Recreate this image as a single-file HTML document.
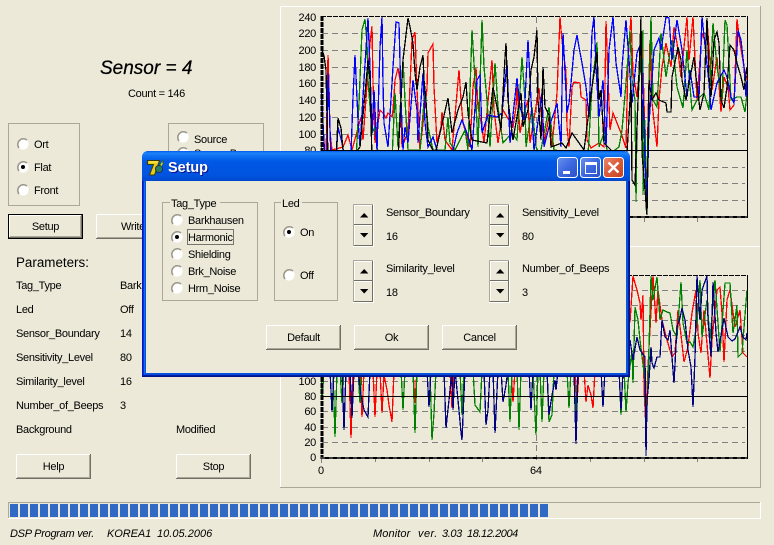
<!DOCTYPE html>
<html><head><meta charset="utf-8"><title>Setup</title>
<style>
html,body{margin:0;padding:0;background:#ECE9D8;width:774px;height:545px;overflow:hidden}
svg{position:absolute;left:0;top:0;display:block}
text{font-family:"Liberation Sans",sans-serif;font-size:11px;letter-spacing:-.3px;fill:#000}
.c{text-anchor:middle}
.r{text-anchor:end}
.k{shape-rendering:crispEdges}
.g{stroke:#808080;stroke-width:1;stroke-dasharray:6 4;fill:none;shape-rendering:crispEdges}
.l{fill:none;stroke-width:1.3;stroke-linejoin:miter;shape-rendering:crispEdges}
.i{font-style:italic}
</style></head><body>
<svg width="774" height="545" viewBox="0 0 774 545" xmlns="http://www.w3.org/2000/svg">
<defs>
<g id="btn" class="k"><rect width="75" height="25" fill="#ECE9D8"/><rect width="75" height="1" fill="#fff"/><rect width="1" height="25" fill="#fff"/><rect x="73" y="1" width="1" height="23" fill="#ACA899"/><rect x="1" y="23" width="73" height="1" fill="#ACA899"/><rect x="74" width="1" height="25" fill="#716F64"/><rect y="24" width="75" height="1" fill="#716F64"/></g>
<g id="rad"><circle r="5.6" fill="#fff"/><path d="M-4,4A5.7,5.7 0 0 1 4,-4" fill="none" stroke="#9A978A" stroke-width="1.5"/></g>
<g id="radc"><use href="#rad"/><circle r="2" fill="#000"/></g>
<g id="spin"><g class="k"><rect width="21" height="43" fill="#fff"/><rect width="20" height="42" fill="#ACA899"/><rect x="1" y="1" width="19" height="41" fill="#ECE9D8"/>
<rect x="1" y="1" width="18" height="1" fill="#fff"/><rect x="1" y="1" width="1" height="19" fill="#fff"/><rect x="19" y="1" width="1" height="20" fill="#716F64"/><rect x="1" y="20" width="19" height="1" fill="#716F64"/>
<rect x="1" y="21" width="18" height="1" fill="#fff"/><rect x="1" y="21" width="1" height="20" fill="#fff"/><rect x="19" y="21" width="1" height="21" fill="#716F64"/><rect x="1" y="41" width="19" height="1" fill="#716F64"/></g>
<path d="M7,13.5h8.4l-4.2,-4.5z M7,29h8.4l-4.2,4.5z" fill="#000"/></g>
<linearGradient id="tb" x1="0" y1="0" x2="0" y2="1"><stop offset="0" stop-color="#0058EE"/><stop offset=".07" stop-color="#1E84F8"/><stop offset=".16" stop-color="#0F72F2"/><stop offset=".35" stop-color="#0058E4"/><stop offset=".8" stop-color="#0054E0"/><stop offset="1" stop-color="#0048CC"/></linearGradient>
<linearGradient id="bb" x1="0" y1="0" x2="1" y2="1"><stop offset="0" stop-color="#6C93EE"/><stop offset=".5" stop-color="#3C68E0"/><stop offset="1" stop-color="#2A4FC8"/></linearGradient>
<linearGradient id="bc" x1="0" y1="0" x2="1" y2="1"><stop offset="0" stop-color="#E98A6C"/><stop offset=".5" stop-color="#DB5A38"/><stop offset="1" stop-color="#C2401E"/></linearGradient>
<pattern id="pb" x="10" y="0" width="10" height="20" patternUnits="userSpaceOnUse"><rect width="8" height="20" fill="#316AC5"/></pattern>
<clipPath id="c1"><rect x="321" y="16" width="427" height="202"/></clipPath>
<clipPath id="c2"><rect x="321" y="275" width="427" height="183"/></clipPath>
</defs>

<rect width="774" height="545" fill="#ECE9D8"/>

<!-- chart panel -->
<g class="k">
<rect x="280" y="6" width="480" height="1" fill="#fff"/>
<rect x="280" y="6" width="1" height="481" fill="#fff"/>
<rect x="760" y="6" width="1" height="482" fill="#ACA899"/>
<rect x="280" y="487" width="481" height="1" fill="#ACA899"/>
<rect x="281" y="246" width="479" height="1" fill="#fff"/>
</g>

<!-- top chart grid -->
<g class="g">
<path d="M322,33.5H745M322,50.5H745M322,67.5H745M322,83.5H745M322,100.5H745M322,117.5H745M322,134.5H745M322,167.5H745M322,183.5H745M322,200.5H745"/>
<path d="M536.5,17V217"/>
</g>
<g font-size="11">
<text class="r" x="316" y="21">240</text><text class="r" x="316" y="37">220</text><text class="r" x="316" y="54">200</text><text class="r" x="316" y="71">180</text><text class="r" x="316" y="87">160</text><text class="r" x="316" y="104">140</text><text class="r" x="316" y="121">120</text><text class="r" x="316" y="138">100</text><text class="r" x="316" y="154">80</text>
</g>

<g clip-path="url(#c1)">
<polyline class="l" stroke="#FF0000" points="321,160 326,160 328,55 329,87 330,132 332,150 343,147 348,135 352,150 361,117 363,140 370,43 372,26 373,83 375,143 380,110 383,113 386,118 388,113 392,117 393,110 395,80 398,68 400,80 402,147 408,132 412,40 415,32 417,90 420,150 427,88 428,53 433,44 434,87 437,143 441,127 442,112 445,140 452,150 459,70 461,100 463,123 470,147 473,87 476,68 478,107 482,127 484,143 492,60 494,110 498,143 503,110 513,127 516,107 517,87 520,133 523,117 528,100 530,143 539,88 541,113 544,143 549,117 552,147 557,93 560,17 561,30 563,50 566,72 567,127 569,147 572,87 574,82 580,83 581,97 586,100 587,140 591,148 599,143 604,147 606,21 608,77 610,130 613,113 617,123 621,133 626,148 628,60 631,17 633,73 637,97 642,40 644,100 645,157 647,195 648,120 650,40 652,103 657,147 659,100 662,67 666,43 671,67 674,27 677,43 681,77 687,17 689,60 693,17 697,100 702,33 706,43 707,20 712,90 717,57 721,112 724,77 728,87 730,110 734,105 737,19 740,43 744,67 747,80"/>
<polyline class="l" stroke="#008000" points="321,147 324,160 356,160 359,103 362,30 365,19 367,43 368,80 372,133 375,127 377,147 380,160 392,160 395,93 398,147 403,60 405,100 408,150 420,150 425,90 428,127 433,150 445,150 448,117 450,143 455,150 465,130 468,150 472,30 475,80 478,147 482,20 484,67 487,100 490,147 495,63 498,107 503,143 512,133 517,140 522,57 525,100 526,147 532,107 536,147 540,155 549,107 554,150 588,155 592,87 597,42 599,147 604,133 608,155 619,147 622,130 626,83 630,30 632,80 635,100 636,202 637,120 639,83 643,30 643,195 645,120 646,210 648,133 651,17 653,100 657,107 661,33 666,77 672,40 677,87 683,108 687,50 692,110 697,100 704,93 709,110 713,23 717,67 722,100 725,20 727,25 731,100 737,97 741,97 745,112 747,93"/>
<polyline class="l" stroke="#0000FF" points="321,88 323,123 325,160 327,160 328,73 329,97 331,160 336,160 338,127 342,143 345,160 351,155 353,97 355,55 358,120 360,147 364,80 368,18 370,67 372,133 374,90 377,150 380,47 382,17 383,83 384,123 388,147 393,67 396,22 399,23 401,100 403,150 405,127 408,143 413,80 417,110 418,143 423,73 425,123 428,147 433,137 437,150 452,155 457,133 462,120 467,133 472,150 477,80 480,75 482,133 488,115 497,117 502,113 507,63 510,143 517,78 520,107 524,120 528,40 529,60 531,100 534,150 542,93 544,147 549,127 556,107 557,103 561,147 563,33 565,72 567,113 569,103 571,83 574,50 577,35 579,47 582,63 586,87 589,117 592,33 594,17 596,67 599,117 603,80 606,147 609,50 613,17 616,63 621,97 622,67 626,20 629,60 632,103 637,53 641,43 644,123 645,160 647,198 648,162 649,123 654,50 659,38 661,50 666,17 669,18 672,60 677,20 682,50 687,97 690,70 694,97 699,97 702,17 709,83 711,110 717,83 724,70 727,77 731,97 734,103 738,30 741,40 744,67 746,97 747,80"/>
<polyline class="l" stroke="#000000" points="321,47 324,56 326,70 328,160 336,160 338,118 341,128 343,150 350,160 360,147 366,83 368,60 370,80 372,160 398,160 403,60 408,18 410,27 413,43 415,73 417,90 420,67 423,55 424,80 426,100 428,140 435,155 448,98 452,133 458,110 463,97 466,82 468,113 472,140 487,143 493,87 497,107 501,130 505,58 506,43 508,100 513,140 521,93 523,127 528,110 531,70 534,57 537,30 538,100 541,140 543,67 545,107 549,115 551,147 562,143 566,148 572,133 584,150 592,87 595,67 597,52 599,100 601,90 604,143 616,155 627,153 631,83 632,180 635,185 638,100 641,17 642,153 647,215 648,153 649,80 652,100 656,93 659,100 666,103 667,112 671,112 672,77 678,47 681,60 682,80 686,100 689,83 694,57 696,77 700,110 704,93 707,18 709,77 711,97 714,40 717,32 719,43 721,100 724,108 727,87 730,45 734,50 737,63 741,77 744,90 747,67"/>
</g>

<!-- top frame -->
<g class="k">
<path d="M321,150.5H748" stroke="#000" fill="none"/>
<rect x="747" y="16" width="1" height="202" fill="#000"/>
<path d="M321,16.5H747" stroke="#000" stroke-dasharray="5 1" fill="none"/>
<path d="M322,16V218" stroke="#000" stroke-width="3" stroke-dasharray="5 1" fill="none"/>
<path d="M321,217H748" stroke="#000" stroke-width="2" fill="none"/>
<path d="M321,217H747" stroke="#808080" stroke-width="1" stroke-dasharray="4 4" fill="none"/>
<path d="M644.5,218v4M697.5,218v4" stroke="#808080" fill="none"/>
</g>

<!-- bottom chart grid -->
<g class="g">
<path d="M322,290.5H745M322,305.5H745M322,320.5H745M322,335.5H745M322,351.5H745M322,366.5H745M322,381.5H745M322,411.5H745M322,427.5H745M322,442.5H745"/>
<path d="M536.5,275V460"/>
</g>
<g>
<text class="r" x="316" y="385">100</text><text class="r" x="316" y="400">80</text><text class="r" x="316" y="415">60</text><text class="r" x="316" y="431">40</text><text class="r" x="316" y="446">20</text><text class="r" x="316" y="461">0</text>
<text x="318" y="474">0</text><text x="530" y="474">64</text>
</g>

<g clip-path="url(#c2)">
<polyline class="l" stroke="#FF0000" points="349,370 351,438 353,370 360,370 362,417 364,370 373,370 375,417 377,370 380,370 382,413 384,375 387,390 389,405 392,422 394,370 413,370 415,403 417,370 450,370 452,408 454,370 511,370 513,402 515,370 575,370 577,402 579,370 584,370 586,402 588,385 591,395 593,408 595,370 630,322 633,276 637,290 640,303 641,320 643,295 644,387 646,430 647,390 649,347 653,276 656,323 658,290 662,320 667,340 672,357 675,353 678,310 681,335 684,362 688,347 692,313 696,290 698,333 701,353 704,310 710,378 712,340 717,290 720,287 722,313 724,362 727,300 730,290 735,327 740,310 743,353 747,357"/>
<polyline class="l" stroke="#008000" points="321,370 322,400 324,370 333,370 335,437 337,370 340,370 342,403 344,370 358,370 360,403 362,370 401,370 403,410 405,370 413,370 415,433 417,370 430,370 432,440 434,413 436,370 460,370 462,415 464,370 473,370 475,405 480,412 482,370 508,370 510,422 512,370 517,370 519,430 521,370 533,370 536,435 538,370 540,370 542,422 544,370 547,370 549,422 552,415 554,370 567,370 569,408 571,370 574,370 576,420 578,370 619,370 621,415 623,370 624,370 626,412 628,383 632,350 633,383 635,307 638,320 640,340 645,380 646,440 649,347 651,276 653,300 657,277 660,320 663,310 667,312 670,313 673,330 677,337 681,282 683,323 687,343 690,342 693,347 697,323 700,280 702,337 707,300 710,340 715,280 720,352 725,283 728,283 730,283 733,333 737,305 738,357 742,353 747,290"/>
<polyline class="l" stroke="#000080" points="330,370 332,412 334,370 342,370 344,430 346,370 350,370 352,418 354,370 358,370 361,395 364,410 368,417 370,370 427,370 429,407 431,370 444,370 446,428 449,400 452,370 453,410 455,370 458,400 461,432 462,440 465,370 484,370 486,425 488,410 490,370 493,370 495,433 498,370 501,370 503,402 506,385 508,370 529,370 531,410 533,370 547,370 549,415 552,395 555,380 556,390 558,370 574,370 576,444 578,370 601,370 603,407 605,370 619,370 621,410 623,370 630,340 633,360 637,337 640,350 645,357 646,456 647,400 649,380 651,347 652,363 654,368 657,357 660,357 662,320 665,337 668,340 670,330 672,357 674,383 677,327 680,318 682,308 685,320 688,350 691,367 693,407 695,357 697,276 700,320 702,290 707,276 708,320 711,357 713,282 716,333 718,352 722,330 724,318 728,337 732,341 735,339 740,327 743,337 746,340 747,333"/>
</g>

<!-- bottom frame -->
<g class="k">
<path d="M321,396.5H748" stroke="#000" fill="none"/>
<rect x="747" y="275" width="1" height="184" fill="#000"/>
<path d="M321,275.5H747" stroke="#000" stroke-dasharray="5 1" fill="none"/>
<path d="M322,275V459" stroke="#000" stroke-width="3" stroke-dasharray="5 1" fill="none"/>
<path d="M321,458H748" stroke="#000" stroke-width="2" fill="none"/>
<path d="M321,458H747" stroke="#808080" stroke-width="1" stroke-dasharray="4 4" fill="none"/>
<path d="M321.5,459v4M375.5,459v3M429.5,459v3M482.5,459v3M590.5,459v3M644.5,459v3M697.5,459v3" stroke="#808080" fill="none"/>
</g>

<!-- left side -->
<text x="100" y="74" class="i" style="font-size:19px;letter-spacing:0;stroke:#000;stroke-width:.25">Sensor = 4</text>
<text x="128" y="97">Count = 146</text>

<g class="k" fill="none">
<rect x="8.5" y="123.5" width="71" height="82" stroke="#ACA899"/>
<rect x="168.5" y="123.5" width="95" height="60" stroke="#ACA899"/>
</g>
<use href="#rad" x="23" y="144"/><use href="#radc" x="23" y="167"/><use href="#rad" x="23" y="190"/>
<text x="34" y="148">Ort</text><text x="34" y="171">Flat</text><text x="34" y="194">Front</text>
<use href="#rad" x="183" y="137"/><use href="#rad" x="183" y="153"/>
<text x="194" y="143">Source</text><text x="194" y="157">Source B</text>

<rect x="8" y="214" width="75" height="25" fill="#000" class="k"/>
<g class="k"><rect x="9" y="215" width="73" height="23" fill="#ECE9D8"/><rect x="9" y="215" width="72" height="1" fill="#fff"/><rect x="9" y="215" width="1" height="22" fill="#fff"/><rect x="81" y="215" width="1" height="23" fill="#716F64"/><rect x="9" y="237" width="73" height="1" fill="#716F64"/><rect x="80" y="216" width="1" height="21" fill="#ACA899"/><rect x="10" y="236" width="71" height="1" fill="#ACA899"/></g>
<text class="c" x="45.5" y="230">Setup</text>
<use href="#btn" x="96" y="214"/><text class="c" x="133" y="230">Write</text>

<text x="16" y="267" style="font-size:13.4px;letter-spacing:0">Parameters:</text>
<text x="16" y="289">Tag_Type</text><text x="120" y="289">Barkhausen</text>
<text x="16" y="313">Led</text><text x="120" y="313">Off</text>
<text x="16" y="337">Sensor_Boundary</text><text x="120" y="337">14</text>
<text x="16" y="361">Sensitivity_Level</text><text x="120" y="361">80</text>
<text x="16" y="385">Similarity_level</text><text x="120" y="385">16</text>
<text x="16" y="409">Number_of_Beeps</text><text x="120" y="409">3</text>
<text x="16" y="433">Background</text><text x="176" y="433">Modified</text>
<use href="#btn" x="16" y="454"/><text class="c" x="53.5" y="470">Help</text>
<use href="#btn" x="176" y="454"/><text class="c" x="213.5" y="470">Stop</text>

<!-- progress -->
<g class="k">
<rect x="8" y="502" width="752" height="1" fill="#ACA899"/><rect x="8" y="502" width="1" height="16" fill="#ACA899"/>
<rect x="760" y="502" width="1" height="17" fill="#fff"/><rect x="8" y="518" width="753" height="1" fill="#fff"/>
<rect x="10" y="504" width="538" height="13" fill="url(#pb)"/>
</g>
<g class="i" style="font-size:10.5px">
<text x="10" y="537" textLength="84" class="i">DSP Program ver.</text><text x="107" y="537" textLength="44" class="i">KOREA1</text><text x="157" y="537" textLength="55" class="i">10.05.2006</text>
<text x="373" y="537" textLength="37" class="i">Monitor</text><text x="418" y="537" textLength="19" class="i">ver.</text><text x="442" y="537" textLength="20" class="i">3.03</text><text x="467" y="537" textLength="51" class="i">18.12.2004</text>
</g>

<!-- dialog -->
<path d="M142,377V158Q142,151 149,151H623Q630,151 630,158V377Z" fill="#0A40D8"/>
<path d="M142,181V158Q142,151 149,151H623Q630,151 630,158V181Z" fill="url(#tb)"/>
<g class="k">
<rect x="142" y="181" width="1" height="196" fill="#0019B8"/><rect x="143" y="181" width="1" height="195" fill="#0831D9"/><rect x="144" y="181" width="1" height="194" fill="#166AEE"/><rect x="145" y="181" width="1" height="193" fill="#0855DD"/>
<rect x="629" y="181" width="1" height="196" fill="#00138C"/><rect x="628" y="181" width="1" height="195" fill="#001EA0"/><rect x="627" y="181" width="1" height="194" fill="#0855DD"/><rect x="626" y="181" width="1" height="193" fill="#0855DD"/>
<rect x="142" y="376" width="488" height="1" fill="#00138C"/><rect x="143" y="375" width="486" height="1" fill="#001EA0"/><rect x="144" y="374" width="484" height="1" fill="#0A4BDE"/><rect x="145" y="373" width="482" height="1" fill="#0855DD"/>
<rect x="146" y="181" width="480" height="192" fill="#ECE9D8"/>
</g>
<!-- delphi icon -->
<g transform="translate(147,159)">
<path d="M0.5,1.5H12.5L7.5,16H2.5L6.5,5.5H0.5Z" fill="#E8CE10" stroke="#3A3A08" stroke-width="1"/>
<path d="M2,3H11" stroke="#FFF27A" stroke-width="1"/>
<circle cx="12" cy="10" r="3.6" fill="#2E7A62" stroke="#16324A" stroke-width=".9"/>
<path d="M13,6L16,0.5L15.5,4L16.5,3.5L14.5,7.5Z" fill="#C8E030" stroke="#3A5000" stroke-width=".5"/>
</g>
<text x="168" y="172" style="font-size:14.4px;font-weight:bold;letter-spacing:0;fill:#0F1089" transform="translate(1,1)">Setup</text>
<text x="168" y="172" style="font-size:14.4px;font-weight:bold;letter-spacing:0;fill:#fff">Setup</text>
<!-- caption buttons -->
<rect x="557.5" y="157.5" width="20" height="20" rx="3" fill="url(#bb)" stroke="#fff"/>
<rect x="563" y="171" width="7" height="3" fill="#fff" class="k"/>
<rect x="580.5" y="157.5" width="20" height="20" rx="3" fill="url(#bb)" stroke="#fff"/>
<rect x="585.5" y="162.5" width="11" height="11" fill="none" stroke="#fff" class="k"/><rect x="585" y="162" width="12" height="3" fill="#fff" class="k"/>
<rect x="603.5" y="157.5" width="20" height="20" rx="3" fill="url(#bc)" stroke="#fff"/>
<path d="M608.5,162.5L618.5,172.5M618.5,162.5L608.5,172.5" stroke="#fff" stroke-width="2.4" fill="none"/>

<!-- group boxes -->
<g class="k" fill="none">
<rect x="162.5" y="202.5" width="95" height="98" stroke="#ACA899"/>
<rect x="274.5" y="202.5" width="63" height="98" stroke="#ACA899"/>
</g>
<rect x="170" y="200" width="50" height="6" fill="#ECE9D8" class="k"/>
<rect x="281" y="200" width="21" height="6" fill="#ECE9D8" class="k"/>
<text x="171" y="207">Tag_Type</text>
<text x="282" y="207">Led</text>
<use href="#rad" x="177" y="220"/><use href="#radc" x="177" y="237"/><use href="#rad" x="177" y="254"/><use href="#rad" x="177" y="271"/><use href="#rad" x="177" y="288"/>
<text x="188" y="224">Barkhausen</text><text x="188" y="241">Harmonic</text><text x="188" y="258">Shielding</text><text x="188" y="275">Brk_Noise</text><text x="188" y="292">Hrm_Noise</text>
<rect x="187.5" y="229.5" width="46" height="15" fill="none" stroke="#000" stroke-dasharray="1 1" class="k"/>
<use href="#radc" x="289" y="232"/><use href="#rad" x="289" y="275"/>
<text x="300" y="236">On</text><text x="300" y="279">Off</text>

<use href="#spin" x="353" y="204"/><use href="#spin" x="353" y="260"/><use href="#spin" x="489" y="204"/><use href="#spin" x="489" y="260"/>
<text x="386" y="216">Sensor_Boundary</text><text x="386" y="240">16</text>
<text x="386" y="272">Similarity_level</text><text x="386" y="296">18</text>
<text x="522" y="216">Sensitivity_Level</text><text x="522" y="240">80</text>
<text x="522" y="272">Number_of_Beeps</text><text x="522" y="296">3</text>

<use href="#btn" x="266" y="325"/><text class="c" x="303.5" y="341">Default</text>
<use href="#btn" x="354" y="325"/><text class="c" x="391.5" y="341">Ok</text>
<use href="#btn" x="442" y="325"/><text class="c" x="479.5" y="341">Cancel</text>
</svg>
</body></html>
